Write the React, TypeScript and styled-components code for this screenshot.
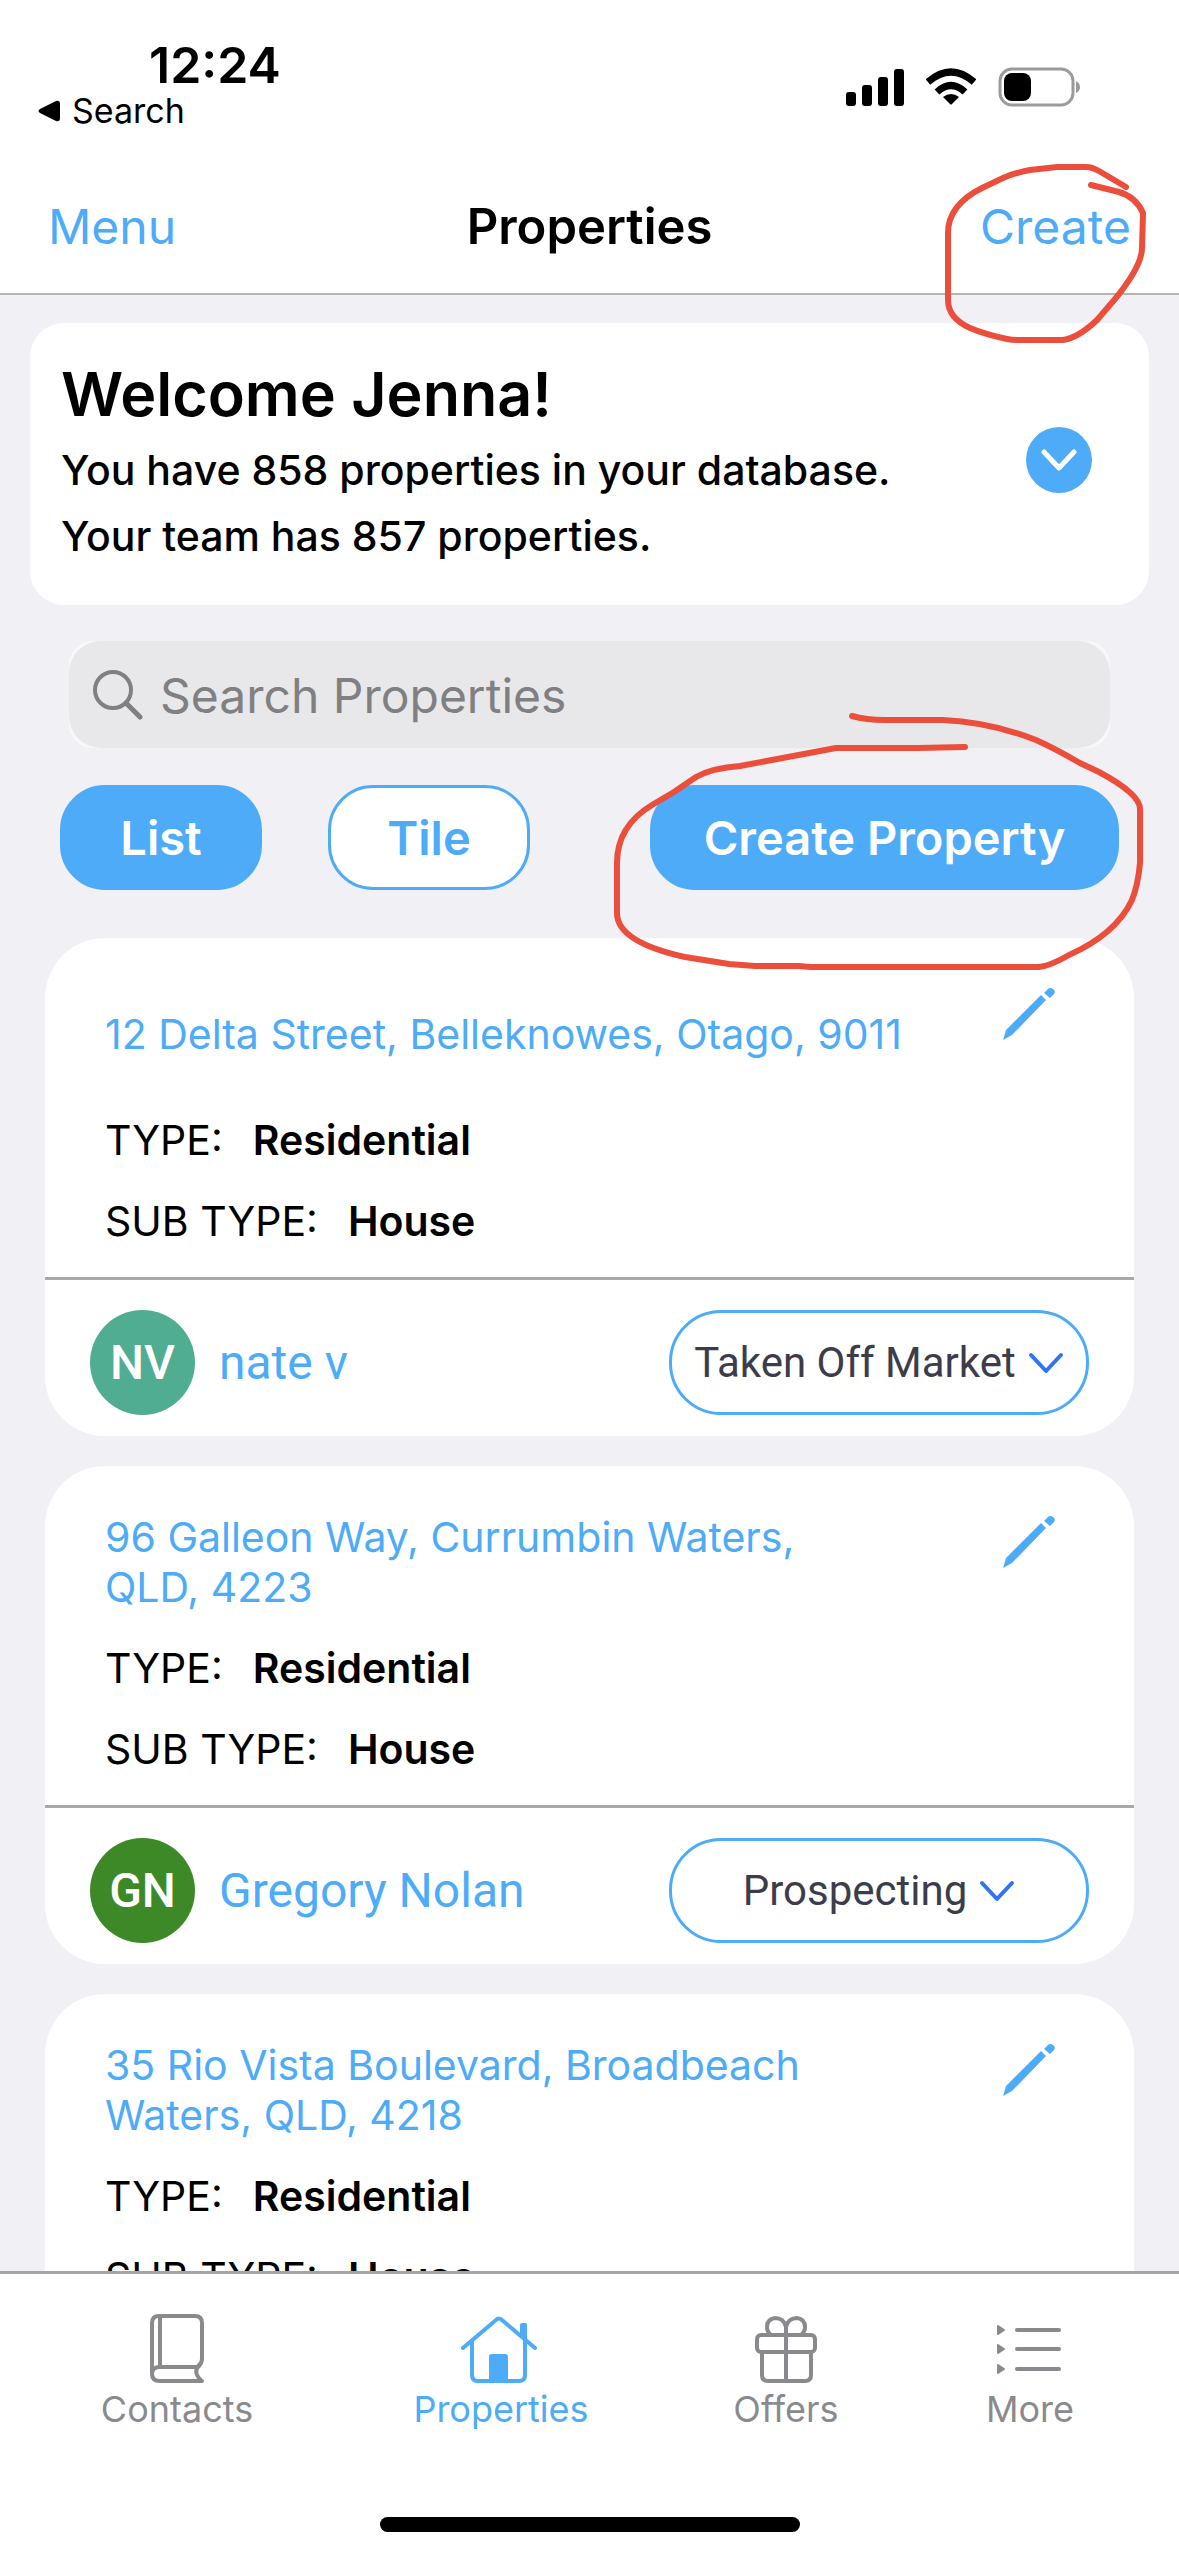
import React from "react";
import styled, { createGlobalStyle } from "styled-components";

const blue = "#4dabf8";
const grey = "#8a8a8e";

const GlobalStyle = createGlobalStyle`
  *, *::before, *::after { box-sizing: border-box; }
  body {
    margin: 0;
    background: #f1f0f5;
    font-family: Inter, "Liberation Sans", sans-serif;
    color: #000;
  }
  button, input, select { font-family: inherit; }
  a { color: inherit; text-decoration: none; }
  svg { display: block; flex: none; }
`;

const Screen = styled.div`
  position: relative;
  display: flex;
  flex-direction: column;
  height: 100vh;
  overflow: hidden;
`;

const Top = styled.header`
  position: relative;
  z-index: 2;
  flex: none;
  background: #fff;
  border-bottom: 2px solid #b4b4b8;
`;

const StatusBar = styled.div`
  display: flex;
  justify-content: space-between;
  align-items: flex-start;
  height: 161px;
  padding: 35px 98px 0 38px;
`;

const Clock = styled.div`
  padding-left: 111px;
  font-size: 50px;
  line-height: 60px;
  font-weight: 600;
`;

const BackLink = styled.a`
  display: flex;
  align-items: center;
  gap: 12px;
  font-size: 34px;
  line-height: 32px;
`;

const StatusIcons = styled.div`
  display: flex;
  align-items: center;
  gap: 22px;
  padding-top: 32px;
`;

const NavBar = styled.div`
  display: grid;
  grid-template-columns: 1fr auto 1fr;
  align-items: center;
  height: 132px;
  padding: 0 48px;
`;

const NavTitle = styled.h1`
  margin: 0;
  font-size: 49px;
  line-height: 60px;
  font-weight: 600;
`;

const TextButton = styled.button<{ $end?: boolean }>`
  justify-self: ${(p) => (p.$end ? "end" : "start")};
  padding: 0;
  border: 0;
  background: none;
  color: ${blue};
  font-size: 48px;
  line-height: 60px;
  cursor: pointer;
`;

const HeaderMark = styled.svg`
  position: absolute;
  top: 160px;
  right: 29px;
  pointer-events: none;
`;

const Main = styled.main`
  flex: 1;
  min-height: 0;
  overflow-y: auto;
  scrollbar-width: none;
  padding-top: 28px;
`;

const Welcome = styled.section`
  display: flex;
  align-items: center;
  justify-content: space-between;
  margin: 0 30px;
  padding: 28px 57px 36px 31px;
  border-radius: 34px;
  background: #fff;
`;

const WelcomeTitle = styled.h2`
  margin: 0;
  font-size: 61px;
  line-height: 86px;
  font-weight: 600;
`;

const WelcomeLine = styled.p`
  margin: 0;
  font-size: 41px;
  line-height: 66px;
  font-weight: 500;
`;

const RoundButton = styled.button`
  display: grid;
  place-items: center;
  width: 66px;
  height: 66px;
  padding: 0;
  border: 0;
  border-radius: 50%;
  background: ${blue};
  cursor: pointer;
`;

const SearchFrame = styled.div`
  margin: 36px 69px 0;
  border-radius: 24px;
  background: #f8f8fa;
`;

const SearchBox = styled.label`
  display: flex;
  align-items: center;
  gap: 17px;
  height: 107px;
  padding: 0 24px;
  border-radius: 32px;
  background: #e8e8ea;
`;

const SearchInput = styled.input`
  flex: 1;
  min-width: 0;
  padding: 2px 0 0;
  border: 0;
  outline: 0;
  background: none;
  color: #000;
  font-size: 48px;
  &::placeholder { color: #808083; opacity: 1; }
`;

const Toolbar = styled.div`
  position: relative;
  z-index: 1;
  display: flex;
  gap: 66px;
  margin-top: 37px;
  padding: 0 60px;
`;

const PillButton = styled.button<{ $outlined?: boolean; $wide?: boolean }>`
  width: ${(p) => (p.$wide ? "469px" : "202px")};
  height: 105px;
  margin-left: ${(p) => (p.$wide ? "auto" : "0")};
  padding: 0;
  border: 3px solid ${blue};
  border-radius: 45px;
  background: ${(p) => (p.$outlined ? "#fff" : blue)};
  color: ${(p) => (p.$outlined ? blue : "#fff")};
  font-size: 47px;
  font-weight: 600;
  cursor: pointer;
`;

const ToolbarMark = styled.svg`
  position: absolute;
  top: -75px;
  right: 29px;
  pointer-events: none;
`;

const CardList = styled.div`
  display: flex;
  flex-direction: column;
  gap: 30px;
  margin-top: 48px;
  padding: 0 45px;
`;

const Card = styled.article`
  border-radius: 60px;
  background: #fff;
`;

const CardBody = styled.div`
  padding: 46px 79px 15px 60px;
`;

const AddressRow = styled.div`
  display: flex;
  justify-content: space-between;
  align-items: flex-start;
  height: 100px;
  margin-bottom: 16px;
`;

const Address = styled.a`
  align-self: center;
  max-width: 820px;
  color: ${blue};
  font-size: 41px;
  line-height: 50px;
  white-space: pre-line;
`;

const IconButton = styled.button`
  padding: 3px 0 0;
  border: 0;
  background: none;
  cursor: pointer;
`;

const Facts = styled.dl`
  margin: 0;
`;

const Fact = styled.div`
  display: flex;
  gap: 30px;
  font-size: 41px;
  line-height: 81px;
  dd { margin: 0; font-weight: 600; }
`;

const CardFooter = styled.div`
  display: flex;
  align-items: center;
  gap: 24px;
  padding: 30px 45px 21px;
  border-top: 3px solid #a9a9a9;
`;

const Avatar = styled.span<{ $color: string }>`
  display: grid;
  place-items: center;
  width: 105px;
  height: 105px;
  border-radius: 50%;
  background: ${(p) => p.$color};
  color: #fff;
  font-family: Roboto, sans-serif;
  font-size: 48px;
  font-weight: 500;
`;

const AgentLink = styled.a`
  flex: 1;
  color: ${blue};
  font-family: Roboto, sans-serif;
  font-size: 48px;
`;

const StatusField = styled.label`
  display: flex;
  align-items: center;
  justify-content: center;
  gap: 12px;
  width: 420px;
  height: 105px;
  border: 3px solid ${blue};
  border-radius: 52px;
`;

const StatusSelect = styled.select`
  appearance: none;
  field-sizing: content;
  padding: 0;
  border: 0;
  outline: 0;
  background: none;
  color: #3c3c4b;
  font-family: Roboto, sans-serif;
  font-size: 42px;
`;

const TabBar = styled.nav`
  position: relative;
  z-index: 2;
  flex: none;
  display: flex;
  flex-direction: column;
  align-items: center;
  justify-content: space-between;
  height: 285px;
  padding: 40px 0 24px;
  border-top: 3px solid #a5a5a7;
  background: #fff;
`;

const Tabs = styled.div`
  display: grid;
  grid-template-columns: 354fr 294fr 276fr 212fr;
  align-self: stretch;
  padding-right: 43px;
`;

const Tab = styled.a<{ $active?: boolean }>`
  display: flex;
  flex-direction: column;
  align-items: center;
  gap: 4px;
  color: ${(p) => (p.$active ? blue : grey)};
  font-size: 36px;
  line-height: 42px;
`;

const HomeIndicator = styled.div`
  width: 420px;
  height: 15px;
  border-radius: 8px;
  background: #000;
`;

const Chevron = ({ color, width }: { color: string; width: number }) => (
  <svg width={36} height={24} viewBox="0 0 36 24" fill="none" stroke={color} strokeWidth={width} strokeLinecap="round" strokeLinejoin="round">
    <path d="M3 4 18 20 33 4" />
  </svg>
);

const Pencil = () => (
  <svg width="53" height="54" viewBox="0 0 53 54" fill={blue}>
    <path d="M1 53 4 43 39 8 44 13 10 48Z" />
    <path d="M42 6 46 2Q48 0 51 2T52 7L48 11Z" />
  </svg>
);

const BookIcon = () => (
  <svg width="54" height="70" viewBox="0 0 54 70" fill="none" stroke={grey} strokeWidth="4">
    <path d="M2 59V9Q2 2 9 2H45Q52 2 52 9V45Q52 49 48 53H10Q2 53 2 60 2 67 10 67H52" strokeLinecap="round" />
    <path d="M10 3V53" />
    <path d="M50 50Q42 58 51 66" />
  </svg>
);

const HouseIcon = () => (
  <svg width="80" height="70" viewBox="0 0 80 70" fill="none" stroke={blue} strokeWidth="4" strokeLinecap="round" strokeLinejoin="round">
    <path d="M2 34 35 6Q38 3 41 6L74 34" />
    <path d="M11 27V61Q11 67 17 67H58Q64 67 64 61V11H61V20" />
    <path d="M29 42Q29 41 31 41H44Q46 41 46 43V67H29Z" fill={blue} strokeWidth="2" />
  </svg>
);

const GiftIcon = () => (
  <svg width="62" height="70" viewBox="0 0 62 70" fill="none" stroke={grey} strokeWidth="4">
    <rect x="2" y="21" width="58" height="17" rx="4" />
    <path d="M7 38V61Q7 67 13 67H50Q56 67 56 61V38M31 21V67" />
    <path d="M31 21V13Q29 4 20 4 12 5 12 13 12 18 16 21M31 21V13Q33 4 42 4 50 5 50 13 50 18 46 21" />
  </svg>
);

const MoreIcon = () => (
  <svg width="66" height="70" viewBox="0 0 66 70" fill={grey} stroke={grey} strokeLinecap="round" strokeLinejoin="round">
    {[16, 35, 55].map((y) => (
      <g key={y}>
        <path d={`M1 ${y - 4} 7 ${y} 1 ${y + 4}Z`} strokeWidth="2" />
        <path d={`M20 ${y}H62`} strokeWidth="4" />
      </g>
    ))}
  </svg>
);

type Property = {
  address: string;
  type: string;
  sub: string;
  agent?: { name: string; initials: string; color: string };
  status?: string;
};

const properties: Property[] = [
  {
    address: "12 Delta Street, Belleknowes, Otago, 9011",
    type: "Residential",
    sub: "House",
    agent: { name: "nate v", initials: "NV", color: "#51ad91" },
    status: "Taken Off Market",
  },
  {
    address: "96 Galleon Way, Currumbin Waters,\nQLD, 4223",
    type: "Residential",
    sub: "House",
    agent: { name: "Gregory Nolan", initials: "GN", color: "#3e8927" },
    status: "Prospecting",
  },
  {
    address: "35 Rio Vista Boulevard, Broadbeach\nWaters, QLD, 4218",
    type: "Residential",
    sub: "House",
  },
];

const tabs = [
  { label: "Contacts", Icon: BookIcon },
  { label: "Properties", Icon: HouseIcon, active: true },
  { label: "Offers", Icon: GiftIcon },
  { label: "More", Icon: MoreIcon },
];

export default function App() {
  return (
    <Screen>
      <GlobalStyle />
      <Top>
        <StatusBar>
          <div>
            <Clock>12:24</Clock>
            <BackLink href="#search">
              <svg width="22" height="22" viewBox="0 0 22 22">
                <path d="M2 9 18 1Q22 0 22 4V18Q22 22 18 21L2 13Q-1 11 2 9Z" />
              </svg>
              Search
            </BackLink>
          </div>
          <StatusIcons>
            <svg width="58" height="38" viewBox="0 0 58 38">
              <rect x="0" y="24" width="10" height="14" rx="3" />
              <rect x="16" y="17" width="10" height="21" rx="3" />
              <rect x="32" y="9" width="10" height="29" rx="3" />
              <rect x="48" y="1" width="10" height="37" rx="3" />
            </svg>
            <svg width="50" height="38" viewBox="0 0 50 38">
              <g fill="none" stroke="#000" strokeWidth="7">
                <path d="M2 14Q25-6 48 14" />
                <path d="M11 24Q25 11 39 24" />
              </g>
              <path d="M17 29Q25 23 33 29L26 36Q25 37 24 36Z" />
            </svg>
            <svg width="83" height="40" viewBox="0 0 83 40">
              <rect x="2" y="2" width="73" height="36" rx="12" fill="none" stroke="#9b9b9b" strokeWidth="3" />
              <rect x="6" y="6" width="27" height="28" rx="8" />
              <path d="M78 14Q82 16 82 20T78 26Z" fill="#9b9b9b" />
            </svg>
          </StatusIcons>
        </StatusBar>
        <NavBar>
          <TextButton>Menu</TextButton>
          <NavTitle>Properties</NavTitle>
          <TextButton $end>Create</TextButton>
        </NavBar>
        <HeaderMark width="210" height="190" viewBox="940 160 210 190" fill="none" stroke="#ec4e3c" strokeWidth="6" strokeLinecap="round" strokeLinejoin="round" aria-hidden="true">
          <path d="M1126 187 1099 171Q1092 167 1086 167H1057L1030 170Q1014 173 1003 178L982 188Q948 205 948 233V300Q948 318 970 328 984 334 1007 339 1012 340 1020 340H1063Q1078 338 1097 320L1115 299Q1142 266 1142 248L1143 213Q1136 197 1119 192L1091 185" />
        </HeaderMark>
      </Top>

      <Main>
        <Welcome>
          <div>
            <WelcomeTitle>Welcome Jenna!</WelcomeTitle>
            <WelcomeLine>You have 858 properties in your database.</WelcomeLine>
            <WelcomeLine>Your team has 857 properties.</WelcomeLine>
          </div>
          <RoundButton aria-label="Show details">
            <Chevron color="#fff" width={5} />
          </RoundButton>
        </Welcome>

        <SearchFrame>
          <SearchBox>
            <svg width="50" height="50" viewBox="0 0 50 50" fill="none" stroke="#808083" strokeWidth="4" strokeLinecap="round">
              <circle cx="20" cy="20" r="18" />
              <path d="M33 33 47 47" strokeWidth="5" />
            </svg>
            <SearchInput type="search" placeholder="Search Properties" aria-label="Search Properties" />
          </SearchBox>
        </SearchFrame>

        <Toolbar>
          <PillButton>List</PillButton>
          <PillButton $outlined>Tile</PillButton>
          <PillButton $wide>Create Property</PillButton>
          <ToolbarMark width="540" height="264" viewBox="610 710 540 264" fill="none" stroke="#ec4e3c" strokeWidth="6" strokeLinecap="round" strokeLinejoin="round" aria-hidden="true">
            <path d="M852 716Q866 720 885 720H943Q990 722 1036 740 1054 748 1080 763L1099 772Q1140 794 1140 809V863Q1138 885 1132 900 1116 934 1069 955 1050 966 1039 967H810L799 966H755L729 964 685 957Q617 942 617 913V863Q617 826 652 805L674 792 696 777Q712 768 740 766L836 748H918L965 747" />
          </ToolbarMark>
        </Toolbar>

        <CardList>
          {properties.map((p) => (
            <Card key={p.address}>
              <CardBody>
                <AddressRow>
                  <Address href="#property">{p.address}</Address>
                  <IconButton aria-label="Edit property">
                    <Pencil />
                  </IconButton>
                </AddressRow>
                <Facts>
                  <Fact>
                    <dt>TYPE:</dt>
                    <dd>{p.type}</dd>
                  </Fact>
                  <Fact>
                    <dt>SUB TYPE:</dt>
                    <dd>{p.sub}</dd>
                  </Fact>
                </Facts>
              </CardBody>
              {p.agent && (
                <CardFooter>
                  <Avatar $color={p.agent.color}>{p.agent.initials}</Avatar>
                  <AgentLink href="#agent">{p.agent.name}</AgentLink>
                  <StatusField>
                    <StatusSelect aria-label="Property status" defaultValue={p.status}>
                      <option>{p.status}</option>
                    </StatusSelect>
                    <Chevron color="#2f74f6" width={4} />
                  </StatusField>
                </CardFooter>
              )}
            </Card>
          ))}
        </CardList>
      </Main>

      <TabBar>
        <Tabs>
          {tabs.map(({ label, Icon, active }) => (
            <Tab key={label} href={`#${label.toLowerCase()}`} $active={active}>
              <Icon />
              {label}
            </Tab>
          ))}
        </Tabs>
        <HomeIndicator />
      </TabBar>
    </Screen>
  );
}
